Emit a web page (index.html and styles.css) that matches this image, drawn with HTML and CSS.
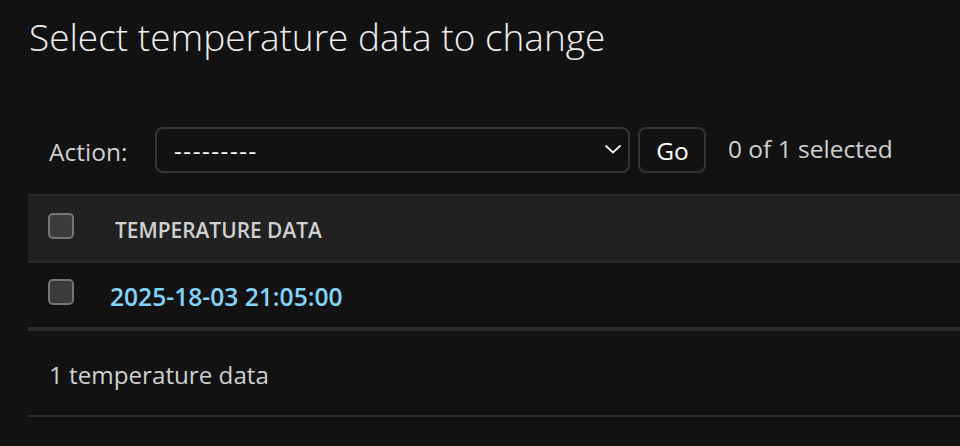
FILE: index.html
```html
<!DOCTYPE html>
<html lang="en">
<head>
<meta charset="utf-8">
<title>Select temperature data to change</title>
<link rel="stylesheet" href="styles.css">
</head>
<body>
<div class="page">
  <h1 class="title">Select temperature data to change</h1>
  <div class="changelist">
    <div class="actions">
      <label class="action-label">Action:</label>
      <div class="select">
        <span class="select-value">---------</span>
        <svg class="chevron" width="18" height="10" viewBox="0 0 18 10"><path d="M1.5 1.5 L9 8.5 L16.5 1.5" fill="none" stroke="#eeeeee" stroke-width="1.8"/></svg>
      </div>
      <button class="go">Go</button>
      <span class="counter">0 of 1 selected</span>
    </div>
    <div class="results">
      <div class="row head">
        <span class="cb"></span>
        <span class="th">TEMPERATURE DATA</span>
      </div>
      <div class="row body">
        <span class="cb"></span>
        <a class="link" href="#">2025-18-03 21:05:00</a>
      </div>
    </div>
    <p class="paginator">1 temperature data</p>
  </div>
</div>
</body>
</html>
```

FILE: styles.css
```css
html, body {
  margin: 0;
  padding: 0;
  background: #121212;
}
body {
  font-family: "Open Sans", "Noto Sans", sans-serif;
  color: #eeeeee;
  overflow: hidden;
}
.page {
  padding-left: 28px;
}
.title {
  margin: 0;
  padding: 15px 0 0 1px;
  font-size: 37px;
  line-height: 44px;
  font-weight: 300;
  color: #eeeeee;
  height: 127px;
  box-sizing: border-box;
}
.actions {
  display: flex;
  align-items: center;
  height: 46px;
  padding-left: 21px;
  margin-bottom: 21px;
}
.action-label {
  font-size: 24.5px;
  color: #d0d0d0;
  width: 106px;
  margin-top: 2px;
}
.select {
  width: 475px;
  height: 46px;
  box-sizing: border-box;
  border: 2px solid #353535;
  border-radius: 8px;
  display: flex;
  align-items: center;
  justify-content: space-between;
  padding: 0 6px 0 17px;
}
.select-value {
  font-size: 24px;
  letter-spacing: 1.6px;
  color: #ffffff;
}
.chevron {
  margin-top: -2px;
}
.go {
  margin-left: 8px;
  width: 68px;
  height: 46px;
  box-sizing: border-box;
  background: #121212;
  border: 2px solid #353535;
  border-radius: 8px;
  color: #ffffff;
  font-family: inherit;
  font-size: 24.5px;
  padding: 0 0 0 1px;
}
.counter {
  margin-left: 22px;
  font-size: 24.5px;
  color: #d0d0d0;
  margin-top: -4px;
}
.results {
  border-bottom: 4px solid #2a2a2a;
}
.row {
  display: flex;
  align-items: center;
  padding-left: 20px;
}
.head {
  background: #212121;
  border-top: 2px solid #2a2a2a;
  border-bottom: 2px solid #2a2a2a;
  height: 65px;
}
.body {
  height: 64px;
}
.cb {
  width: 26px;
  height: 26px;
  box-sizing: border-box;
  border: 2px solid #767676;
  border-radius: 5px;
  background: #3b3b3b;
  flex: none;
  margin-top: -6px;
}
.th {
  margin-left: 41px;
  font-size: 20.9px;
  font-weight: 600;
  color: #d0d0d0;
  margin-top: 2px;
}
.link {
  margin-left: 36px;
  font-size: 24.6px;
  font-weight: 600;
  color: #81d4fa;
  text-decoration: none;
  margin-top: 2px;
}
.paginator {
  margin: 0;
  box-sizing: border-box;
  padding: 27px 0 0 21px;
  font-size: 24.2px;
  color: #d0d0d0;
  border-bottom: 2px solid #2a2a2a;
  height: 86px;
}
```
